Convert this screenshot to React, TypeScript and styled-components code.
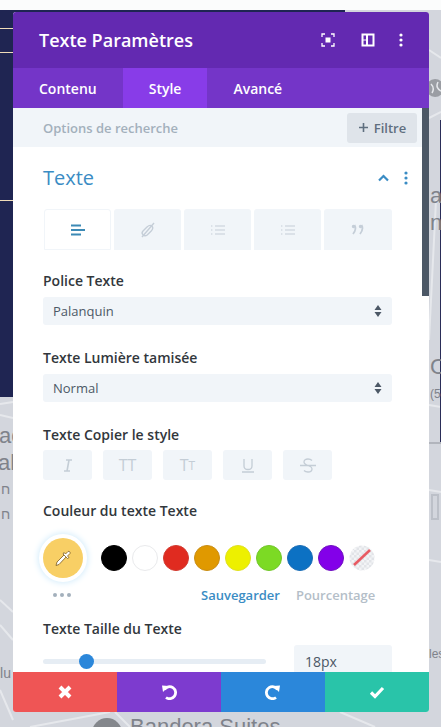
import styled, { createGlobalStyle } from "styled-components";

const GlobalStyle = createGlobalStyle`
    html, body {
        margin: 0;
        padding: 0;
        background: #ffffff;
        font-family: "Open Sans", "Liberation Sans", sans-serif;
    }
`;

const Page = styled.div`
    position: relative;
    width: 441px;
    height: 727px;
    overflow: hidden;
    background: #d3d6dd;
`;

const TopStrip = styled.div`
    position: absolute;
    left: 0;
    top: 0;
    width: 441px;
    height: 10px;
    background: #fbfcfc;
`;

const NavyBlock = styled.div`
    position: absolute;
    left: 0;
    top: 10px;
    width: 345px;
    height: 387px;
    background: #1f2552;
`;

const NavyRule = styled.div<{ $top: number }>`
    position: absolute;
    left: 0;
    top: ${({ $top }) => $top}px;
    width: 13px;
    height: 1px;
    background: #efdcb9;
`;

const NavySliver = styled.div`
    position: absolute;
    left: 440px;
    top: 120px;
    width: 1px;
    height: 322px;
    background: #2a2d58;
`;

const MapLines = styled.svg`
    position: absolute;
    left: 0;
    top: 0;
`;

const MapLabel = styled.span<{ $x: number; $y: number; $size: number }>`
    position: absolute;
    left: ${({ $x }) => $x}px;
    top: ${({ $y }) => $y}px;
    font-family: "Liberation Sans", sans-serif;
    font-size: ${({ $size }) => $size}px;
    line-height: 1;
    color: #7f838b;
    white-space: nowrap;
`;

const Modal = styled.div`
    position: absolute;
    left: 13px;
    top: 12px;
    width: 416px;
    height: 700px;
    display: flex;
    flex-direction: column;
    border-radius: 3px;
    overflow: hidden;
    background: #ffffff;
`;

const Header = styled.div`
    flex: none;
    height: 56px;
    display: flex;
    align-items: center;
    padding: 0 21px 0 26px;
    background: #6329b1;
    color: #ffffff;
`;

const Title = styled.h1`
    flex: 1;
    margin: 0;
    font-size: 18px;
    font-weight: 600;
    line-height: 1;
`;

const HeaderIcons = styled.div`
    display: flex;
    align-items: center;
`;

const HeaderIcon = styled.svg<{ $gap: number }>`
    display: block;
    width: 14px;
    height: 14px;
    margin-left: ${({ $gap }) => $gap}px;
`;

const Tabs = styled.div`
    flex: none;
    height: 40px;
    display: flex;
    background: #7435c8;
`;

const Tab = styled.div<{ $active?: boolean }>`
    display: flex;
    align-items: center;
    padding: 0 26px;
    font-size: 14px;
    font-weight: 600;
    color: #ffffff;
    background: ${({ $active }) => ($active ? "#883ce8" : "transparent")};
`;

const Content = styled.div`
    flex: 1;
    min-height: 0;
    display: flex;
    overflow: hidden;
`;

const Column = styled.div`
    flex: 1;
    min-width: 0;
`;

const ScrollTrack = styled.div`
    flex: none;
    width: 7px;
`;

const ScrollThumb = styled.div`
    height: 188px;
    background: #4c5866;
`;

const SearchBar = styled.div`
    height: 39px;
    box-sizing: border-box;
    display: flex;
    align-items: center;
    justify-content: space-between;
    padding: 0 5px 0 30px;
    background: #f1f5f9;
`;

const Placeholder = styled.span`
    font-size: 13px;
    font-weight: 600;
    color: #a3b0bc;
`;

const FilterButton = styled.div`
    width: 70px;
    height: 30px;
    display: flex;
    align-items: center;
    justify-content: center;
    gap: 5px;
    border-radius: 3px;
    background: #dfe4ea;
    font-size: 13px;
    font-weight: 600;
    color: #5f6f7f;
`;

const Panel = styled.div`
    padding: 0 30px;
`;

const PanelHead = styled.div`
    height: 62px;
    display: flex;
    align-items: center;
    justify-content: space-between;
`;

const PanelTitle = styled.h2`
    margin: 0;
    font-size: 20px;
    font-weight: 400;
    line-height: 1;
    color: #3a8cc4;
`;

const PanelActions = styled.div`
    display: flex;
    align-items: center;
    gap: 15px;
    margin-right: -16px;
`;

const AlignTabs = styled.div`
    display: grid;
    grid-template-columns: 67px 67px 67px 67px 1fr;
    gap: 3px;
    height: 41px;
    margin-left: 1px;
`;

const AlignTab = styled.div<{ $active?: boolean }>`
    display: flex;
    align-items: center;
    justify-content: center;
    border-radius: 3px 3px 0 0;
    background: ${({ $active }) => ($active ? "#ffffff" : "#f1f5f9")};
    border: ${({ $active }) => ($active ? "1px solid #f1f5f9" : "1px solid transparent")};
`;

const Label = styled.div<{ $top: number }>`
    margin-top: ${({ $top }) => $top}px;
    font-size: 14px;
    font-weight: 600;
    line-height: 20px;
    color: #32373c;
`;

const Select = styled.div`
    height: 28px;
    margin-top: 6px;
    box-sizing: border-box;
    display: flex;
    align-items: center;
    justify-content: space-between;
    padding: 0 10px;
    border-radius: 3px;
    background: #f1f5f9;
    font-size: 13px;
    color: #4c5866;
`;

const SelectArrows = styled.svg`
    width: 8px;
    height: 12px;
`;

const StyleButtons = styled.div`
    display: flex;
    gap: 11px;
    margin-top: 5px;
`;

const StyleButton = styled.div`
    width: 49px;
    height: 30px;
    display: flex;
    align-items: center;
    justify-content: center;
    border-radius: 3px;
    background: #f1f5f9;
    font-size: 16px;
    color: #c4cdd6;
`;

const SmallCap = styled.span`
    font-size: 12px;
`;

const ColorRow = styled.div`
    display: flex;
    align-items: center;
    margin-top: 10px;
    height: 54px;
`;

const Picker = styled.div`
    flex: none;
    width: 40px;
    height: 40px;
    display: flex;
    align-items: center;
    justify-content: center;
    border-radius: 50%;
    background: #f8cf65;
    box-shadow: 0 0 0 4px #ffffff, 0 0 6px 5px #d3ecfb;
`;

const Swatches = styled.div`
    display: flex;
    gap: 5px;
    margin-left: 18px;
`;

const Swatch = styled.div<{ $color: string; $ring: string }>`
    width: 26px;
    height: 26px;
    box-sizing: border-box;
    border-radius: 50%;
    background: ${({ $color }) => $color};
    border: 1px solid ${({ $ring }) => $ring};
`;

const EmptySwatch = styled.svg`
    display: block;
    width: 26px;
    height: 26px;
`;

const ColorFoot = styled.div`
    display: flex;
    align-items: center;
    height: 20px;
`;

const MoreDots = styled.div`
    display: flex;
    gap: 3px;
    margin: 0 130px 0 10px;
`;

const Dot = styled.i`
    width: 4px;
    height: 4px;
    border-radius: 50%;
    background: #a3b0bc;
`;

const SaveLink = styled.span`
    font-size: 13px;
    font-weight: 600;
    color: #3a8cc4;
`;

const PercentLink = styled.span`
    margin-left: 16px;
    font-size: 13px;
    font-weight: 600;
    color: #b4bec8;
`;

const SliderRow = styled.div`
    display: flex;
    align-items: center;
    justify-content: space-between;
    margin-top: 6px;
`;

const SliderTrack = styled.div`
    position: relative;
    width: 223px;
    height: 5px;
    border-radius: 3px;
    background: #e6edf4;
`;

const SliderThumb = styled.div`
    position: absolute;
    top: -5px;
    width: 15px;
    height: 15px;
    border-radius: 50%;
    background: #2b87da;
`;

const SizeInput = styled.div`
    width: 98px;
    height: 32px;
    box-sizing: border-box;
    display: flex;
    align-items: center;
    padding-left: 11px;
    border-radius: 3px;
    background: #f1f5f9;
    font-size: 14px;
    color: #4c5866;
`;

const Footer = styled.div`
    flex: none;
    height: 40px;
    display: grid;
    grid-template-columns: repeat(4, 1fr);
`;

const FooterButton = styled.div<{ $color: string }>`
    display: flex;
    align-items: center;
    justify-content: center;
    background: ${({ $color }) => $color};
`;

const FooterIcon = styled.svg`
    display: block;
    width: 16px;
    height: 16px;
`;

const swatches = [
    ["#000000", "#000000"],
    ["#ffffff", "#e9eaec"],
    ["#e02b20", "#d23a30"],
    ["#e09900", "#c98d14"],
    ["#edf000", "#e0e020"],
    ["#7cda24", "#72c62a"],
    ["#0c71c3", "#1b6db5"],
    ["#8300e9", "#6f10c0"],
];

function ListIcon() {
    return (
        <svg width="16" height="14" viewBox="0 0 16 14" fill="none" stroke="#c5ced8" strokeWidth="1.2">
            <path d="M5 3h10M5 7h10M5 11h10" />
            <path d="M1 3h1.4M1 7h1.4M1 11h1.4" />
        </svg>
    );
}

export default function App() {
    return (
        <Page>
            <GlobalStyle />
            <MapLines width="441" height="727" viewBox="0 0 441 727" fill="none" stroke="#e6e8ec" strokeWidth="2">
                <path d="M0 404 L13 402 M0 415 L13 418 M0 600 L13 612 M0 625 L13 640 M0 690 L13 720" />
                <path d="M429 50 L441 58 M429 118 L441 112 M429 340 L436 200 M429 405 L441 407 M429 490 L441 492 M429 560 L441 562" />
                <path d="M30 727 L110 712 M130 727 L115 712 M340 712 L375 727" />
                <circle cx="435" cy="88" r="9" fill="#9a9da3" stroke="none" />
                <path d="M431 84 Q435 88 432 93 M438 82 Q435 88 441 91" strokeWidth="1.500" />
                <path d="M429 443 L441 443" stroke="#8f939b" strokeWidth="1" />
                <path d="M432 495 h6 v24 h-6 z" stroke="#bcc0c8" strokeWidth="2" />
                <circle cx="107" cy="733" r="15" fill="#84878c" stroke="none" />
            </MapLines>
            <TopStrip />
            <NavyBlock />
            <NavyRule $top={28} />
            <NavyRule $top={52} />
            <NavyRule $top={200} />
            <NavySliver />
            <MapLabel $x={-1} $y={425} $size={22}>ac</MapLabel>
            <MapLabel $x={-2} $y={452} $size={22}>al</MapLabel>
            <MapLabel $x={1} $y={482} $size={14}>ח</MapLabel>
            <MapLabel $x={1} $y={507} $size={14}>ח</MapLabel>
            <MapLabel $x={-3} $y={666} $size={14}>ilu</MapLabel>
            <MapLabel $x={430} $y={185} $size={22}>a</MapLabel>
            <MapLabel $x={430} $y={212} $size={22}>n</MapLabel>
            <MapLabel $x={430} $y={356} $size={22}>C</MapLabel>
            <MapLabel $x={430} $y={388} $size={12}>(5</MapLabel>
            <MapLabel $x={429} $y={648} $size={12}>les</MapLabel>
            <MapLabel $x={130} $y={716} $size={22}>Bandera Suites</MapLabel>
            <Modal>
                <Header>
                    <Title>Texte Paramètres</Title>
                    <HeaderIcons>
                        <HeaderIcon $gap={0} viewBox="0 0 14 14" fill="none" stroke="#ffffff" strokeWidth="1.3">
                            <path d="M1 4V1h3M10 1h3v3M13 10v3h-3M4 13H1v-3" />
                            <rect x="4.500" y="4.500" width="5" height="5" fill="#ffffff" stroke="none" />
                        </HeaderIcon>
                        <HeaderIcon $gap={26} viewBox="0 0 14 14" fill="none" stroke="#ffffff" strokeWidth="2">
                            <rect x="1.500" y="1.500" width="11" height="11" />
                            <path d="M6 1.500v11" />
                            <path d="M1.500 7h4" strokeWidth="1" />
                        </HeaderIcon>
                        <HeaderIcon $gap={19} viewBox="0 0 14 14" fill="#ffffff">
                            <circle cx="7" cy="2" r="1.600" />
                            <circle cx="7" cy="7" r="1.600" />
                            <circle cx="7" cy="12" r="1.600" />
                        </HeaderIcon>
                    </HeaderIcons>
                </Header>
                <Tabs>
                    <Tab>Contenu</Tab>
                    <Tab $active>Style</Tab>
                    <Tab>Avancé</Tab>
                </Tabs>
                <Content>
                    <Column>
                        <SearchBar>
                            <Placeholder>Options de recherche</Placeholder>
                            <FilterButton>
                                <svg width="11" height="11" viewBox="0 0 11 11" stroke="#5f6f7f" strokeWidth="1.600">
                                    <path d="M5.500 1v9M1 5.500h9" />
                                </svg>
                                Filtre
                            </FilterButton>
                        </SearchBar>
                        <Panel>
                            <PanelHead>
                                <PanelTitle>Texte</PanelTitle>
                                <PanelActions>
                                    <svg width="11" height="8" viewBox="0 0 11 8" fill="none" stroke="#3a8cc4" strokeWidth="2.200">
                                        <path d="M1 6.500 5.500 2l4.500 4.500" />
                                    </svg>
                                    <svg width="4" height="14" viewBox="0 0 4 14" fill="#3a8cc4">
                                        <circle cx="2" cy="2" r="1.600" />
                                        <circle cx="2" cy="7" r="1.600" />
                                        <circle cx="2" cy="12" r="1.600" />
                                    </svg>
                                </PanelActions>
                            </PanelHead>
                            <AlignTabs>
                                <AlignTab $active>
                                    <svg width="15" height="12" viewBox="0 0 15 12" fill="none" stroke="#3d8ab5" strokeWidth="2">
                                        <path d="M1 1.500h10M1 6h14M1 10.500h10" />
                                    </svg>
                                </AlignTab>
                                <AlignTab>
                                    <svg width="16" height="16" viewBox="0 0 16 16" fill="none" stroke="#c5ced8" strokeWidth="1.400">
                                        <path d="M3 9 7 5c2-1.800 4-1.800 5-.8s.8 3-.8 4.800l-4 4c-1.800 1.200-3.200 .8-4.200-.2s-1.200-2.600 0-3.800Z" />
                                        <path d="M14 1 2 15" />
                                    </svg>
                                </AlignTab>
                                <AlignTab><ListIcon /></AlignTab>
                                <AlignTab><ListIcon /></AlignTab>
                                <AlignTab>
                                    <svg width="14" height="11" viewBox="0 0 14 11" fill="none" stroke="#c5ced8" strokeWidth="1.800">
                                        <circle cx="2.500" cy="2.500" r=".8" />
                                        <path d="M3.500 1c1.500 2.500 1 6-1.500 9" />
                                        <circle cx="9.500" cy="2.500" r=".8" />
                                        <path d="M10.500 1c1.500 2.500 1 6-1.500 9" />
                                    </svg>
                                </AlignTab>
                            </AlignTabs>
                            <Label $top={21}>Police Texte</Label>
                            <Select>
                                Palanquin
                                <SelectArrows viewBox="0 0 8 12" fill="#4c5866">
                                    <path d="M4 0l3.500 5H.5ZM4 12 .5 7h7Z" />
                                </SelectArrows>
                            </Select>
                            <Label $top={23}>Texte Lumière tamisée</Label>
                            <Select>
                                Normal
                                <SelectArrows viewBox="0 0 8 12" fill="#4c5866">
                                    <path d="M4 0l3.500 5H.5ZM4 12 .5 7h7Z" />
                                </SelectArrows>
                            </Select>
                            <Label $top={23}>Texte Copier le style</Label>
                            <StyleButtons>
                                <StyleButton>
                                    <svg width="10" height="13" viewBox="0 0 10 13" fill="none" stroke="#c4cdd6" strokeWidth="1.600">
                                        <path d="M3 1h6M1 12h6M6 1 4 12" />
                                    </svg>
                                </StyleButton>
                                <StyleButton>TT</StyleButton>
                                <StyleButton>T<SmallCap>T</SmallCap></StyleButton>
                                <StyleButton>
                                    <svg width="12" height="15" viewBox="0 0 12 15" fill="none" stroke="#c4cdd6" strokeWidth="1.300">
                                        <path d="M2 1v7c0 2.500 1.500 3.500 4 3.500s4-1 4-3.500V1M0 14h12" />
                                    </svg>
                                </StyleButton>
                                <StyleButton>
                                    <svg width="16" height="15" viewBox="0 0 16 15" fill="none" stroke="#c4cdd6" strokeWidth="1.300">
                                        <path d="M12 2.500C11 1.500 9.500 1 8 1 5.500 1 4 2.200 4 4s2 2.800 4 3.500 4 1.500 4 3.500-1.500 3-4 3c-1.500 0-3-.5-4-1.500M0 7.500h16" />
                                    </svg>
                                </StyleButton>
                            </StyleButtons>
                            <Label $top={21}>Couleur du texte Texte</Label>
                            <ColorRow>
                                <Picker>
                                    <svg width="20" height="20" viewBox="0 0 20 20" fill="#ffffff" stroke="#7a5a20" strokeWidth="0.800">
                                        <path d="M12 6 14 8 6 16.500 3 17.500 4 14Z" />
                                        <path d="M11 4.500 12.500 6 15 3.500a1.500 1.500 0 0 1 2 2L14.500 8 16 9.500 14.500 10.500 10 6Z" />
                                    </svg>
                                </Picker>
                                <Swatches>
                                    {swatches.map(([color, ring]) => (
                                        <Swatch key={color} $color={color} $ring={ring} />
                                    ))}
                                    <EmptySwatch viewBox="0 0 26 26">
                                        <defs>
                                            <pattern id="check" width="5" height="5" patternUnits="userSpaceOnUse">
                                                <rect width="5" height="5" fill="#f3f4f6" />
                                                <rect width="2.500" height="2.500" fill="#e2e4e8" />
                                                <rect x="2.500" y="2.500" width="2.500" height="2.500" fill="#e2e4e8" />
                                            </pattern>
                                        </defs>
                                        <circle cx="13" cy="13" r="12.500" fill="url(#check)" />
                                        <path d="M5 20 21 5" stroke="#e85a62" strokeWidth="2.500" />
                                    </EmptySwatch>
                                </Swatches>
                            </ColorRow>
                            <ColorFoot>
                                <MoreDots>
                                    <Dot />
                                    <Dot />
                                    <Dot />
                                </MoreDots>
                                <SaveLink>Sauvegarder</SaveLink>
                                <PercentLink>Pourcentage</PercentLink>
                            </ColorFoot>
                            <Label $top={14}>Texte Taille du Texte</Label>
                            <SliderRow>
                                <SliderTrack>
                                    <SliderThumb style={{ left: 36 }} />
                                </SliderTrack>
                                <SizeInput>18px</SizeInput>
                            </SliderRow>
                        </Panel>
                    </Column>
                    <ScrollTrack>
                        <ScrollThumb />
                    </ScrollTrack>
                </Content>
                <Footer>
                    <FooterButton $color="#ef5555">
                        <FooterIcon viewBox="0 0 16 16" fill="none" stroke="#ffffff" strokeWidth="4">
                            <path d="M3 3l10 10M13 3 3 13" />
                        </FooterIcon>
                    </FooterButton>
                    <FooterButton $color="#7d3bcf">
                        <FooterIcon viewBox="0 0 16 16" fill="none" stroke="#ffffff" strokeWidth="2.800">
                            <path d="M3.500 5.500A6 6 0 1 1 5 13.500" />
                            <path d="M1 1.500 8 2 2 8Z" fill="#ffffff" stroke="none" />
                        </FooterIcon>
                    </FooterButton>
                    <FooterButton $color="#2b87da">
                        <FooterIcon viewBox="0 0 16 16" fill="none" stroke="#ffffff" strokeWidth="2.800">
                            <path d="M12.500 5.500A6 6 0 1 0 11 13.500" />
                            <path d="M15 1.500 8 2 14 8Z" fill="#ffffff" stroke="none" />
                        </FooterIcon>
                    </FooterButton>
                    <FooterButton $color="#29c4a9">
                        <FooterIcon viewBox="0 0 16 16" fill="none" stroke="#ffffff" strokeWidth="3.200">
                            <path d="M2 8.500 6 12.500 14 4" />
                        </FooterIcon>
                    </FooterButton>
                </Footer>
            </Modal>
        </Page>
    );
}
